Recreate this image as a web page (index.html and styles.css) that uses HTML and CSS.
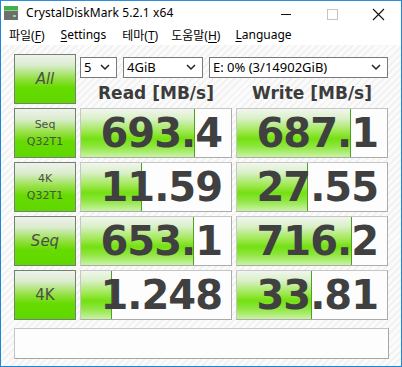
FILE: index.html
```html
<!DOCTYPE html>
<html>
<head>
<meta charset="utf-8">
<link rel="stylesheet" href="styles.css">
</head>
<body>
<div class="window">
  <div class="titlebar">
    <svg class="appicon" width="14" height="14" viewBox="0 0 14 14">
      <rect x="0" y="0" width="14" height="4" fill="#3fb24a"/>
      <rect x="0" y="4" width="14" height="1" fill="#8fd08f"/>
      <rect x="0" y="5" width="14" height="9" fill="#6e6e6e"/>
      <rect x="9" y="9" width="3" height="2" fill="#7ee07e"/>
    </svg>
    <span class="title">CrystalDiskMark 5.2.1 x64</span>
    <div class="controls">
      <svg width="46" height="23" viewBox="0 0 46 23"><line x1="18" y1="13.5" x2="28" y2="13.5" stroke="#111" stroke-width="1"/></svg>
      <svg width="46" height="23" viewBox="0 0 46 23"><rect x="18.5" y="8.5" width="10" height="10" fill="none" stroke="#c4c4c4" stroke-width="1"/></svg>
      <svg width="46" height="23" viewBox="0 0 46 23"><path d="M18 8 L29 19 M29 8 L18 19" stroke="#111" stroke-width="1.1"/></svg>
    </div>
  </div>
  <div class="menubar">
    <span class="menu">파일(<u>F</u>)</span>
    <span class="menu"><u>S</u>ettings</span>
    <span class="menu">테마(<u>T</u>)</span>
    <span class="menu">도움말(<u>H</u>)</span>
    <span class="menu"><u>L</u>anguage</span>
  </div>
  <div class="client">
    <div class="grid">
      <div class="label big italic">All</div>
      <div class="top">
        <div class="combos">
          <div class="combo c1"><span>5</span><svg class="chev" width="10" height="7" viewBox="0 0 10 7"><polyline points="1,1 5,5 9,1" fill="none" stroke="#222" stroke-width="1.5"/></svg></div>
          <div class="combo c2"><span>4GiB</span><svg class="chev" width="10" height="7" viewBox="0 0 10 7"><polyline points="1,1 5,5 9,1" fill="none" stroke="#222" stroke-width="1.5"/></svg></div>
          <div class="combo c3"><span>E: 0% (3/14902GiB)</span><svg class="chev" width="10" height="7" viewBox="0 0 10 7"><polyline points="1,1 5,5 9,1" fill="none" stroke="#222" stroke-width="1.5"/></svg></div>
        </div>
        <div class="heads">
          <div class="head">Read [MB/s]</div>
          <div class="head">Write [MB/s]</div>
        </div>
      </div>

      <div class="label small">Seq<br>Q32T1</div>
      <div class="value"><div class="bar" style="width:114px"></div><span class="num">693.4</span></div>
      <div class="value"><div class="bar" style="width:114px"></div><span class="num">687.1</span></div>

      <div class="label small">4K<br>Q32T1</div>
      <div class="value"><div class="bar" style="width:61px"></div><span class="num">11.59</span></div>
      <div class="value"><div class="bar" style="width:71px"></div><span class="num">27.55</span></div>

      <div class="label big italic">Seq</div>
      <div class="value"><div class="bar" style="width:113px"></div><span class="num">653.1</span></div>
      <div class="value"><div class="bar" style="width:115px"></div><span class="num">716.2</span></div>

      <div class="label big">4K</div>
      <div class="value"><div class="bar" style="width:31px"></div><span class="num">1.248</span></div>
      <div class="value"><div class="bar" style="width:75px"></div><span class="num">33.81</span></div>
    </div>
    <div class="comment"></div>
  </div>
</div>
</body>
</html>
```
FILE: styles.css
```css
* { box-sizing: border-box; }
html, body { margin: 0; padding: 0; }
body { width: 402px; height: 367px; overflow: hidden; background: #fff; }

.window {
  width: 402px;
  height: 367px;
  border: 1px solid #1b86d8;
  border-top-color: #2f8fdc;
  display: flex;
  flex-direction: column;
  background: #fff;
  font-family: "Noto Sans", "Noto Sans CJK KR", sans-serif;
}

.titlebar {
  height: 23px;
  display: flex;
  align-items: center;
  background: #fff;
}
.appicon { margin-left: 3px; margin-top: 0; }
.title {
  margin-left: 8px;
  font-size: 12px;
  color: #000;
  letter-spacing: 0.1px;
}
.controls {
  margin-left: auto;
  display: flex;
  align-self: flex-start;
}

.menubar {
  height: 21px;
  display: flex;
  align-items: center;
  padding-left: 8px;
  font-size: 12px;
  color: #000;
}
.menu { margin-right: 15px; }
.menu:nth-child(1) { margin-right: 16px; }
.menu:nth-child(2) { margin-right: 16px; }
.menu:nth-child(3) { margin-right: 13px; }
.menu:nth-child(4) { margin-right: 15px; }
.menu u { text-underline-offset: 2px; }

.client {
  flex: 1;
  padding: 9px 0 0 13px;
  background: repeating-linear-gradient(135deg, #fbfbfb 0px, #fbfbfb 3px, #f2f2f2 3px, #f2f2f2 5px);
}

.grid {
  display: grid;
  grid-template-columns: 62px 152px 152px;
  grid-auto-rows: 50px;
  column-gap: 4px;
  row-gap: 4px;
}

.label {
  border: 1px solid #6f846f;
  background: linear-gradient(to bottom, #f0f2ee 0%, #d9eccc 22%, #93e040 50%, #66db00 68%, #5fd800 100%);
  display: flex;
  align-items: center;
  justify-content: center;
  text-align: center;
  color: #4a5046;
  font-family: "DejaVu Sans", sans-serif;
}
.label.small { font-size: 11px; line-height: 17px; }
.label.big { font-size: 15px; }
.label.italic { font-style: italic; }

.top {
  grid-column: 2 / 4;
  display: flex;
  flex-direction: column;
}
.combos {
  display: flex;
  gap: 6px;
  margin-top: 3px;
  height: 21px;
}
.combo {
  border: 1px solid #7a7a7a;
  background: #fff;
  display: flex;
  align-items: center;
  justify-content: space-between;
  padding: 0 6px 0 3px;
  font-size: 13px;
  color: #000;
  font-family: "Noto Sans", sans-serif;
}
.combo span { line-height: 19px; }
.c1 { width: 37px; }
.c2 { width: 80px; }
.c3 { flex: 1; }

.heads {
  display: grid;
  grid-template-columns: 152px 152px;
  column-gap: 4px;
  margin-top: 4px;
}
.head {
  text-align: center;
  font-family: "DejaVu Sans", sans-serif;
  font-weight: bold;
  font-size: 17px;
  color: #3c3c3c;
  line-height: 22px;
}

.value {
  position: relative;
  border: 1px solid #ababab;
  border-top-color: #c6c6c6;
  border-left-color: #c6c6c6;
  background: #fdfdfd;
  display: flex;
  align-items: center;
  justify-content: flex-end;
  padding-right: 9px;
  overflow: hidden;
}
.bar {
  position: absolute;
  left: 0;
  top: 0;
  bottom: 0;
  background: linear-gradient(to bottom, #f1f6ee 0%, #d9f0c8 20%, #9be84a 48%, #74e012 62%, #8ee63e 78%, #c9f3a4 100%);
  border-right: 1px solid #4fa020;
}
.num {
  position: relative;
  font-family: "DejaVu Sans", sans-serif;
  font-weight: bold;
  font-size: 40px;
  letter-spacing: -1px;
  color: #404040;
  line-height: 48px;
}

.comment {
  margin-top: 8px;
  width: 375px;
  height: 31px;
  border: 1px solid #a6a6a6;
  border-top-color: #c4c4c4;
  border-left-color: #c4c4c4;
  background: #fdfdfd;
}
```
